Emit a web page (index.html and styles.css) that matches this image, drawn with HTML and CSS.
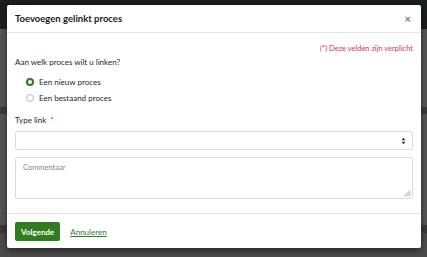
FILE: index.html
```html
<!DOCTYPE html>
<html lang="nl">
<head>
  <meta charset="UTF-8" />
  <meta name="viewport" content="width=device-width, initial-scale=1.0" />
  <title>Toevoegen gelinkt proces</title>
  <link rel="stylesheet" href="styles.css">
</head>
<body>
  <div class="page">
    <div class="topbar"></div>
    <div class="band light"></div>
    <div class="band dark"></div>
    <div class="band mid"></div>
    <div class="band brown"></div>
    <div class="band bottom"></div>
  </div>

  <div class="modal">
    <div class="modal-header">
      <h4>Toevoegen gelinkt proces</h4>
      <span class="close">&times;</span>
    </div>

    <div class="modal-body">
      <p class="required-note">(*) Deze velden zijn verplicht</p>
      <p class="question">Aan welk proces wilt u linken?</p>

      <label class="radio"><span class="dot checked"></span>Een nieuw proces</label>
      <label class="radio"><span class="dot"></span>Een bestaand proces</label>

      <label class="field-label">Type link <span class="star">*</span></label>
      <div class="select">
        <svg width="5" height="8" viewBox="0 0 5 8"><path d="M0.5 3.2 L2.5 0.8 L4.5 3.2 Z M0.5 4.8 L2.5 7.2 L4.5 4.8 Z" fill="#333"/></svg>
      </div>

      <div class="textarea">
        <span class="placeholder">Commentaar</span>
        <svg class="grip" width="8" height="8" viewBox="0 0 8 8"><path d="M7.5 1 L1 7.5 M7.5 3 L3 7.5 M7.5 5 L5 7.5 M7.5 7 L7 7.5" stroke="#888" stroke-width="0.7"/></svg>
      </div>
    </div>

    <div class="modal-footer">
      <button class="btn">Volgende</button>
      <a href="#" class="cancel">Annuleren</a>
    </div>
  </div>
</body>
</html>
```

FILE: styles.css
```css
body { margin: 0; font-family: "Lato", "Open Sans", sans-serif; background: #505050; overflow: hidden; }

.page { height: 257px; display: flex; flex-direction: column; }
.topbar { height: 29px; background: #1b1d20; }
.band.light { height: 78px; background: #555555; }
.band.dark { height: 7px; background: #3a3a3a; }
.band.mid { height: 111px; background: #545454; }
.band.brown { height: 8px; background: #3f3632; }
.band.bottom { flex: 1; background: #4a4a4a; }

.modal {
  position: absolute; left: 7px; top: 5px;
  width: 414px; height: 243px;
  background: #fff; border-radius: 2px;
  box-shadow: 0 2px 6px rgba(0,0,0,0.5);
  display: flex; flex-direction: column;
  color: #1f1f1f;
}

.modal-header {
  height: 28px; box-sizing: border-box;
  padding: 0 8px; border-bottom: 1px solid #e5e5e5;
  display: flex; align-items: center; justify-content: space-between;
}
.modal-header h4 { margin: 0; font-size: 9.5px; font-weight: bold; color: #1a1a1a; }
.close { font-size: 11px; font-weight: bold; color: #777; margin-right: 2px; }

.modal-body { padding: 8px 8px 0; flex: 1; font-size: 8px; }
.required-note { margin: 3px 0 0; text-align: right; color: #e0304a; font-size: 7.5px; }
.question { margin: 4px 0 7px; }

.radio { display: flex; align-items: center; gap: 5px; margin-left: 11px; height: 16px; }
.dot {
  width: 6px; height: 6px; border-radius: 50%;
  border: 1px solid #bbb; background: #fff;
}
.dot.checked { border: 2px solid #2e7d1e; width: 4px; height: 4px; }

.field-label { display: block; margin-top: 9px; }
.star { color: #e0304a; margin-left: 2px; }

.select {
  margin-top: 6px; height: 19px; box-sizing: border-box;
  border: 1px solid #d8dde3; border-radius: 2px;
  display: flex; align-items: center; justify-content: flex-end; padding-right: 6px;
}

.textarea {
  position: relative;
  margin-top: 7px; height: 42px; box-sizing: border-box;
  border: 1px solid #d8dde3; border-radius: 2px;
  padding: 4px 7px;
}
.placeholder { color: #888; font-size: 7.5px; }
.grip { position: absolute; right: 1px; bottom: 1px; }

.modal-footer {
  height: 33px; border-top: 1px solid #e5e5e5;
  padding: 1px 8px 0; display: flex; align-items: center; gap: 10px;
}
.btn {
  background: #2e7d1e; color: #fff; border: none; border-radius: 2px;
  font-family: inherit; font-size: 8px; font-weight: bold;
  height: 19px; padding: 0 6px;
}
.cancel { color: #2e7d1e; font-size: 8px; }
```
